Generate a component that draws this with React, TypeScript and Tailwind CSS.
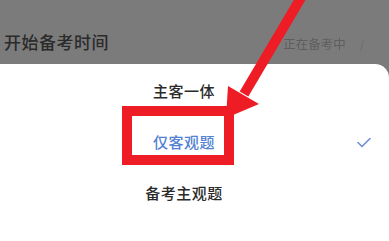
import React from 'react';

const options = [
  { label: '主客一体', selected: false },
  { label: '仅客观题', selected: true },
  { label: '备考主观题', selected: false },
];

export default function App() {
  return (
    <div
      className="relative w-[389px] h-[241px] overflow-hidden bg-[#7b7b7b]"
      style={{ fontFamily: '"Noto Sans CJK SC", "Noto Sans", sans-serif' }}
    >
      {/* dimmed page header */}
      <div className="h-[64px] flex items-end pb-[10px] pl-[4px] pr-[25px]">
        <span className="text-[17px] leading-[24px] font-medium text-[#2b2b2b] tracking-[0.5px]">开始备考时间</span>
        <div className="ml-auto flex items-center gap-[14px] mb-[2px]">
          <span className="text-[12.5px] leading-[16px] text-[#5e5e5e] blur-[0.6px]">正在备考中</span>
          <span className="text-[11px] text-[#6a6a6a]">/</span>
        </div>
      </div>

      {/* bottom sheet */}
      <div className="bg-white rounded-tr-[14px] pt-[2px]">
        {options.map((o) => (
          <div key={o.label} className="relative h-[51px] flex items-center justify-center pr-[21px]">
            <span
              className={
                o.selected
                  ? 'text-[15px] font-medium text-[#5281d2] tracking-[0.5px]'
                  : 'text-[15px] font-medium text-[#2a2a2a] tracking-[0.5px]'
              }
            >
              {o.label}
            </span>
            {o.selected && (
              <svg className="absolute right-[18px] top-[20px]" width="14" height="11" viewBox="0 0 14 11">
                <path d="M1 5.5 L5 9.5 L13 1.5" fill="none" stroke="#6d8fd4" strokeWidth="1.6" strokeLinecap="round" strokeLinejoin="round" />
              </svg>
            )}
          </div>
        ))}
        <div className="h-[30px] flex justify-center pr-[21px] pt-[19px]">
          <span className="text-[15px] leading-[22px] font-medium text-[#2a2a2a] tracking-[0.5px]">取消</span>
        </div>
      </div>

      {/* red annotation */}
      <svg className="absolute inset-0 pointer-events-none" width="389" height="241" viewBox="0 0 389 241">
        <rect x="127" y="111" width="102" height="49" fill="none" stroke="#ee1c24" strokeWidth="10" />
        <line x1="302" y1="-4" x2="244" y2="94" stroke="#ee1c24" strokeWidth="10" />
        <polygon points="228,86 259,104 226,118" fill="#ee1c24" />
      </svg>
    </div>
  );
}
